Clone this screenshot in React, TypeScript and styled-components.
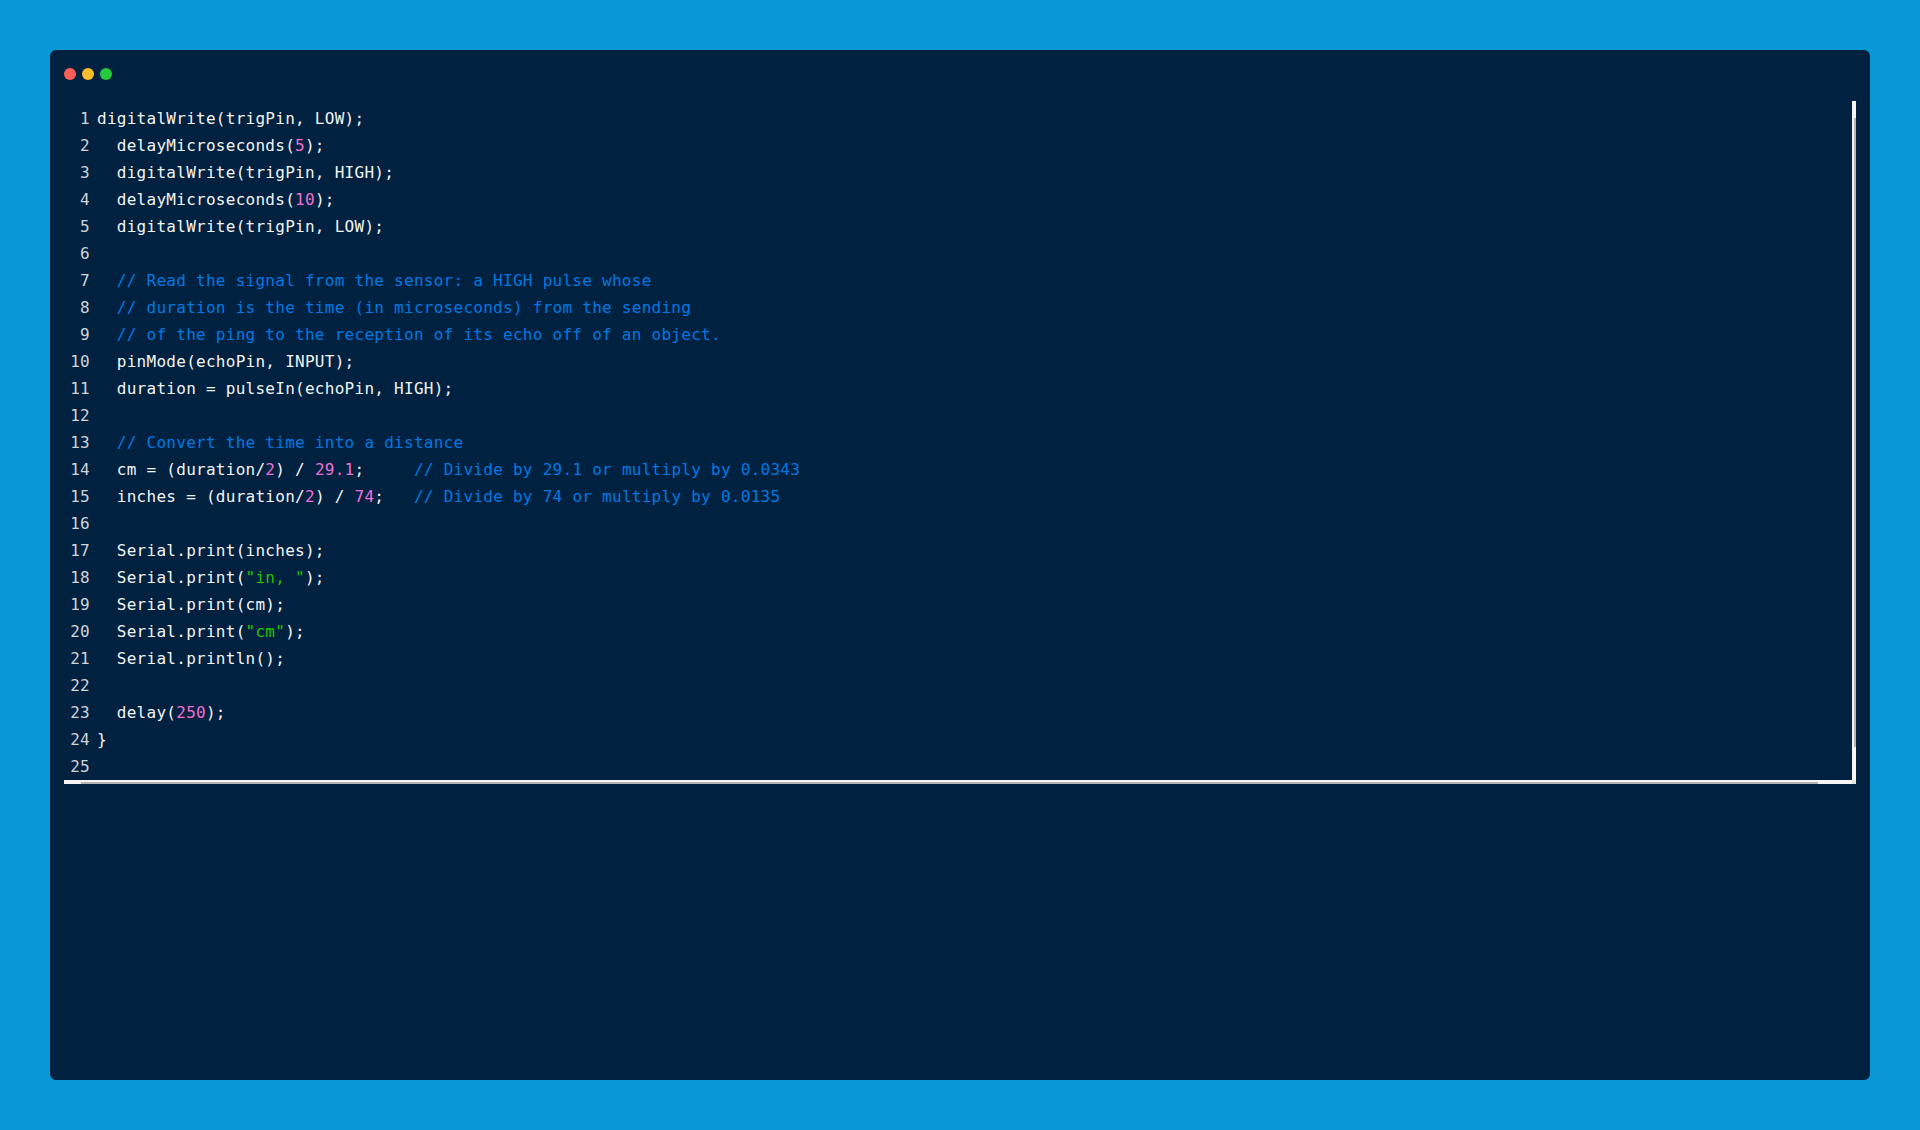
import React from "react";
import styled, { createGlobalStyle } from "styled-components";

const Global = createGlobalStyle`
  html, body {
    margin: 0;
    padding: 0;
    background: #0798d5;
  }
`;

const Page = styled.div`
  height: 1130px;
  box-sizing: border-box;
  padding: 50px;
  background: #0798d5;
`;

const Window = styled.div`
  height: 100%;
  box-sizing: border-box;
  padding: 18px 14px 0;
  background: #002140;
  border-radius: 6px;
`;

const Dots = styled.div`
  display: flex;
  gap: 6px;
  height: 12px;
  margin-bottom: 21px;
`;

const Dot = styled.span<{ $color: string }>`
  width: 12px;
  height: 12px;
  border-radius: 50%;
  background: ${(p) => p.$color};
`;

const CodeBox = styled.div`
  position: relative;
  height: 683px;
  overflow: hidden;
  font-family: "DejaVu Sans Mono", "Liberation Mono", monospace;
  font-size: 16px;
  letter-spacing: 0.27px;
  line-height: 27px;
  color: #f4f4f4;
`;

const Lines = styled.div`
  padding-top: 4px;
`;

const Line = styled.div`
  display: flex;
  height: 27px;
`;

const LineNo = styled.span`
  flex: none;
  width: 26px;
  margin-right: 7px;
  text-align: right;
  color: #d0d3d8;
`;

const Text = styled.span`
  white-space: pre;
`;

const Num = styled.span`
  color: #f06fd2;
`;

const Str = styled.span`
  color: #1fc600;
`;

const Comment = styled.span`
  color: #0079e0;
`;

/* scrollbars sit over the code area, drawn by hand since they belong to the look */
const VerticalBar = styled.div`
  position: absolute;
  top: 0;
  right: 0;
  bottom: 4px;
  width: 4px;
  box-sizing: border-box;
  padding: 17px 0 0 2px;
  background: #f5f5f5;
`;

const VerticalThumb = styled.div`
  width: 2px;
  height: 629px;
  background: #b4b4b4;
`;

const HorizontalBar = styled.div`
  position: absolute;
  left: 0;
  right: 4px;
  bottom: 0;
  height: 4px;
  box-sizing: border-box;
  padding: 2px 0 0 17px;
  background: #f5f5f5;
`;

const HorizontalThumb = styled.div`
  width: 1737px;
  height: 2px;
  background: #b4b4b4;
`;

const Corner = styled.div`
  position: absolute;
  right: 0;
  bottom: 0;
  width: 4px;
  height: 4px;
  background: #e4e4e4;
`;

const rows: React.ReactNode[] = [
  "digitalWrite(trigPin, LOW);",
  <>  delayMicroseconds(<Num>5</Num>);</>,
  "  digitalWrite(trigPin, HIGH);",
  <>  delayMicroseconds(<Num>10</Num>);</>,
  "  digitalWrite(trigPin, LOW);",
  "",
  <>  <Comment>// Read the signal from the sensor: a HIGH pulse whose</Comment></>,
  <>  <Comment>// duration is the time (in microseconds) from the sending</Comment></>,
  <>  <Comment>// of the ping to the reception of its echo off of an object.</Comment></>,
  "  pinMode(echoPin, INPUT);",
  "  duration = pulseIn(echoPin, HIGH);",
  "",
  <>  <Comment>// Convert the time into a distance</Comment></>,
  <>  cm = (duration/<Num>2</Num>) / <Num>29.1</Num>;{"     "}<Comment>// Divide by 29.1 or multiply by 0.0343</Comment></>,
  <>  inches = (duration/<Num>2</Num>) / <Num>74</Num>;{"   "}<Comment>// Divide by 74 or multiply by 0.0135</Comment></>,
  "",
  "  Serial.print(inches);",
  <>  Serial.print(<Str>"in, "</Str>);</>,
  "  Serial.print(cm);",
  <>  Serial.print(<Str>"cm"</Str>);</>,
  "  Serial.println();",
  "",
  <>  delay(<Num>250</Num>);</>,
  "}",
  "",
];

export default function App() {
  return (
    <Page>
      <Global />
      <Window>
        <Dots>
          <Dot $color="#ff5f56" />
          <Dot $color="#ffbd2e" />
          <Dot $color="#27c93f" />
        </Dots>
        <CodeBox>
          <Lines>
            {rows.map((row, i) => (
              <Line key={i}>
                <LineNo>{i + 1}</LineNo>
                <Text>{row}</Text>
              </Line>
            ))}
          </Lines>
          <VerticalBar>
            <VerticalThumb />
          </VerticalBar>
          <HorizontalBar>
            <HorizontalThumb />
          </HorizontalBar>
          <Corner />
        </CodeBox>
      </Window>
    </Page>
  );
}
